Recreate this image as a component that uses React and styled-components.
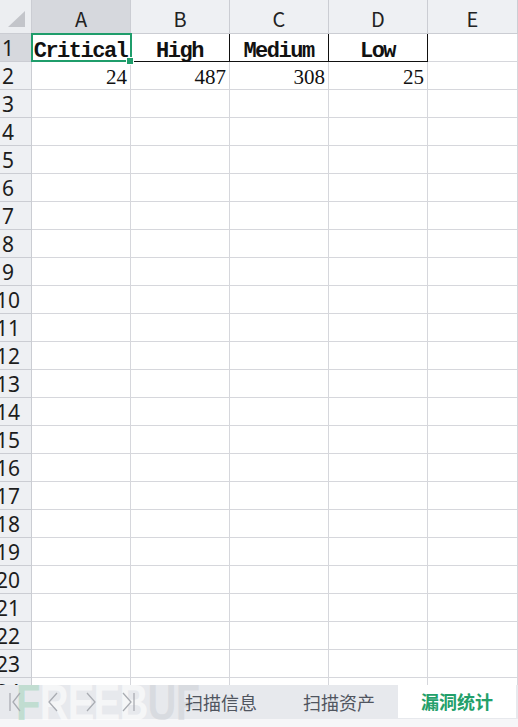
import React from 'react';
import styled, { createGlobalStyle, css } from 'styled-components';

const GlobalStyle = createGlobalStyle`
    html, body {
        margin: 0;
        padding: 0;
        background: #ffffff;
        overflow: hidden;
    }
    * {
        box-sizing: border-box;
    }
`;

const GRID = '#d6d7dc';
const HEAD_LINE = '#cbcdd3';
const GREEN = '#1f9d6b';

const Page = styled.div`
    width: 518px;
    height: 727px;
    display: flex;
    flex-direction: column;
    font-family: "Noto Sans CJK SC", "Noto Sans", sans-serif;
`;

const Sheet = styled.div`
    height: 685px;
    overflow: hidden;
    display: grid;
    grid-template-columns: 32px repeat(4, 99px) 1fr;
    grid-template-rows: 34px;
    grid-auto-rows: 28px;
`;

const Corner = styled.div`
    position: relative;
    background: #eceef1;
    border-right: 1px solid ${HEAD_LINE};
    border-bottom: 1px solid ${HEAD_LINE};
`;

const CornerMark = styled.svg`
    position: absolute;
    left: 8px;
    top: 11px;
`;

const ColHead = styled.div`
    display: flex;
    align-items: center;
    justify-content: center;
    background: ${p => (p.$active ? '#d6d8dd' : '#eef0f3')};
    border-right: 1px solid ${HEAD_LINE};
    border-bottom: 1px solid ${HEAD_LINE};
    font-size: 20px;
    color: #222;
    padding-top: 3px;
`;

const RowHead = styled.div`
    overflow: hidden;
    background: ${p => (p.$active ? '#d6d8dd' : '#eef0f3')};
    border-right: 1px solid ${HEAD_LINE};
    border-bottom: 1px solid ${HEAD_LINE};
`;

const RowNum = styled.div`
    width: 16px;
    height: 100%;
    display: flex;
    align-items: center;
    justify-content: center;
    white-space: nowrap;
    font-family: "Noto Sans", sans-serif;
    font-size: 21px;
    color: #1d1d1d;
    padding-top: 1px;
`;

const Cell = styled.div`
    position: relative;
    display: flex;
    align-items: center;
    justify-content: ${p => (p.$align === 'right' ? 'flex-end' : 'center')};
    padding: 0 3px 0 2px;
    white-space: nowrap;
    border-right: 1px solid ${p => (p.$boxed ? '#111' : GRID)};
    border-bottom: 1px solid ${p => (p.$boxed ? '#111' : GRID)};
    color: #111;
    ${p => p.$bold && css`
        font-family: "Liberation Mono", monospace;
        font-weight: 700;
        font-size: 22px;
        letter-spacing: -1.5px;
        padding-top: 7px;
    `}
    ${p => p.$number && css`
        font-family: "Liberation Serif", serif;
        font-size: 21px;
        padding-top: 3px;
    `}
    ${p => p.$selected && css`
        &::after {
            content: '';
            position: absolute;
            top: -1px;
            left: -1px;
            right: -2px;
            bottom: -1px;
            border: 2px solid ${GREEN};
        }
        &::before {
            content: '';
            position: absolute;
            right: -4px;
            bottom: -4px;
            width: 6px;
            height: 6px;
            background: ${GREEN};
            border: 1px solid #fff;
            z-index: 1;
        }
    `}
`;

const TabBar = styled.div`
    position: relative;
    height: 34px;
    display: flex;
    background: #e7e9ed;
`;

const NavGroup = styled.div`
    position: relative;
    width: 162px;
`;

/* site stamp laid over the sheet tabs */
const Watermark = styled.div`
    position: absolute;
    left: 16px;
    top: -7px;
    display: flex;
    font-family: "Liberation Sans", sans-serif;
    font-weight: 700;
    font-size: 50px;
    line-height: 50px;
    letter-spacing: -1px;
    transform: scaleX(0.8);
    transform-origin: left top;
    white-space: nowrap;
    pointer-events: none;
`;

const MarkPart = styled.span`
    color: ${p => p.$tone};
`;

const Arrows = styled.svg`
    position: absolute;
    left: 0;
    top: 0;
`;

const Tab = styled.div`
    position: relative;
    width: 118px;
    display: flex;
    align-items: center;
    justify-content: center;
    font-size: 18px;
    padding-bottom: 1px;
    color: ${p => (p.$active ? '#23a06a' : '#50555f')};
    font-weight: ${p => (p.$active ? 700 : 400)};
    background: ${p => (p.$active ? '#ffffff' : 'transparent')};
    margin-bottom: ${p => (p.$active ? '1px' : '0')};
`;

const BottomStrip = styled.div`
    flex: 1;
    background: #f6f6f8;
`;

const columns = ['A', 'B', 'C', 'D', 'E'];
const headers = ['Critical', 'High', 'Medium', 'Low'];
const counts = [24, 487, 308, 25];
const rowCount = 24;

function renderRow(r) {
    const cells = [
        <RowHead key={`h${r}`} $active={r === 1}>
            <RowNum>{r}</RowNum>
        </RowHead>
    ];
    columns.forEach((c, i) => {
        let props = {};
        let text = '';
        if (r === 1 && i < 4) {
            props = { $boxed: true, $bold: true, $selected: i === 0 };
            text = headers[i];
        } else if (r === 2 && i < 4) {
            props = { $align: 'right', $number: true };
            text = counts[i];
        }
        cells.push(<Cell key={`${c}${r}`} {...props}>{text}</Cell>);
    });
    return cells;
}

export default function App() {
    const rows = [];
    for (let r = 1; r <= rowCount; r++) rows.push(...renderRow(r));

    return (
        <Page>
            <GlobalStyle />
            <Sheet>
                <Corner>
                    <CornerMark width="18" height="17" viewBox="0 0 18 17">
                        <polygon points="17,0 17,16 0,16" fill="#c3c5ca" />
                    </CornerMark>
                </Corner>
                {columns.map((c, i) => (
                    <ColHead key={c} $active={i === 0}>{c}</ColHead>
                ))}
                {rows}
            </Sheet>
            <TabBar>
                <NavGroup>
                    <Watermark>
                        <MarkPart $tone="rgba(160, 212, 185, 0.55)">F</MarkPart>
                        <MarkPart $tone="rgba(255, 255, 255, 0.6)">REEB</MarkPart>
                        <MarkPart $tone="rgba(190, 193, 200, 0.35)">UF</MarkPart>
                    </Watermark>
                    <Arrows width="162" height="34" viewBox="0 0 162 34" fill="none" stroke="#a9acb2" strokeWidth="1.3">
                        <path d="M10 8 V26" />
                        <path d="M20 8 L13 17 L20 26" />
                        <path d="M57 8 L49 17 L57 26" />
                        <path d="M87 8 L95 17 L87 26" />
                        <path d="M123 8 L131 17 L123 26" />
                        <path d="M134 8 V26" />
                    </Arrows>
                </NavGroup>
                <Tab>扫描信息</Tab>
                <Tab>扫描资产</Tab>
                <Tab $active>漏洞统计</Tab>
            </TabBar>
            <BottomStrip />
        </Page>
    );
}
